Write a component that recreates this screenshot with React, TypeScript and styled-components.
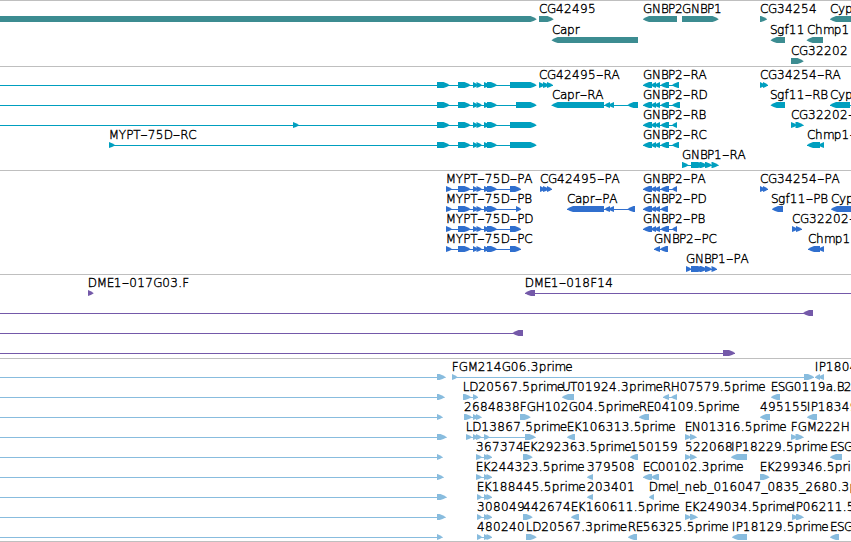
import React from 'react';
import styled, { createGlobalStyle } from 'styled-components';

const GlobalStyle = createGlobalStyle`
  body { margin: 0; background: #fff; overflow: hidden; }
`;

const Viewer = styled.main`
  display: flex;
  flex-direction: column;
  width: 851px;
  height: 542px;
  overflow: hidden;
  background: #fff;
`;

const Track = styled.section<{ $height: number; $color: string }>`
  box-sizing: border-box;
  flex: none;
  display: flex;
  flex-direction: column;
  height: ${(p) => p.$height}px;
  border-top: 1px solid #bfbfbf;
  color: ${(p) => p.$color};
`;

const Lane = styled.svg<{ $height: number }>`
  display: block;
  flex: none;
  width: 851px;
  height: ${(p) => p.$height}px;
  overflow: visible;
`;

const Label = styled.text`
  font-family: 'DejaVu Sans', sans-serif;
  font-size: 12px;
  font-weight: 200;
  fill: #000;
  stroke: #000;
  stroke-width: 0.38px;
`;

const BottomRule = styled.div`
  flex: none;
  height: 1px;
  background: #bfbfbf;
`;

type Direction = 1 | -1;
type Span = [start: number, end: number];
interface Feature {
  dir: Direction;
  spans: Span[];
  line?: Span;
}
interface RowData {
  labels: [x: number, text: string][];
  features: Feature[];
}
interface TrackData {
  id: string;
  color: string;
  height: number;
  rowHeight: number;
  rows: RowData[];
}

/* Advances used to space the label characters; digits take 8px. */
const ADVANCE: Record<string, number> = {
  A: 8, B: 7, C: 8, D: 9, E: 7, F: 7, G: 9, H: 9, I: 4, K: 8, L: 6.5, M: 10, N: 9,
  P: 7, R: 8, S: 7, T: 7, U: 8, X: 8, Y: 7.5, '-': 7.5, '.': 4, _: 6,
  a: 7, b: 8, c: 6, e: 7, f: 4.3, g: 7.5, h: 8, i: 3, l: 3, m: 10.7, n: 8, p: 7.8, r: 5, y: 7,
};

interface Run {
  text: string;
  xs: number[];
}

/* Splits a label into runs, keeping each hyphen apart so it can be drawn wide. */
const layoutRuns = (x: number, text: string): Run[] => {
  let cursor = x + (/^[ABD-FH-RT-Z]/.test(text) ? 0.7 : 0);
  return text
    .split(/(-)/)
    .filter(Boolean)
    .map((part) => ({
      text: part,
      xs: [...part].map((ch) => {
        const at = cursor;
        cursor += ADVANCE[ch] ?? 8;
        return at;
      }),
    }));
};

const arrowPoints = ([a, b]: Span, dir: Direction) => {
  const tip = Math.min(b - a, 6);
  const tail = dir === 1 ? a : b;
  const head = dir === 1 ? b : a;
  const neck = head - dir * tip;
  const mid = head - dir * tip * 0.5;
  return `${tail},15 ${neck},15 ${mid},16.3 ${head},18 ${head},18.6 ${mid},20 ${neck},21 ${tail},21`;
};

const f = (dir: Direction, ...spans: Span[]): Feature => ({ dir, spans });
const joined = (dir: Direction, ...spans: Span[]): Feature => ({
  dir,
  spans,
  line: [spans[0][0], spans[spans.length - 1][1]],
});
const lined = (dir: Direction, line: Span, ...spans: Span[]): Feature => ({ dir, spans, line });

const myptExons = (last: number): Span[] => [
  [437, 449.5], [458, 470.5], [473, 478], [476.5, 482], [484, 490], [487, 497], [last, 536.5],
];
const myptCds = (last: number) =>
  joined(1, [446, 452], [458, 470.5], [473, 478], [476.5, 482], [484, 490], [487, 497], [last, 521]);
const gnbp2 = (end: number) =>
  joined(-1, [643, 652], [651, 656], [654.5, 660], [660.5, 669], [672, end]);
const est = (start: number) => joined(1, [start, 482], [484, 489], [486.5, 492]);
const upstream = (end: number) => lined(1, [0, end], [437, end]);

const TRACKS: TrackData[] = [
  {
    id: 'genes', color: '#3c8c91', height: 66, rowHeight: 21,
    rows: [
      {
        labels: [[539, 'CG42495'], [643, 'GNBP2'], [682, 'GNBP1'], [760, 'CG34254'], [830, 'Cyp']],
        features: [f(1, [-10, 536.5]), f(1, [539, 553.5]), f(-1, [643, 677]), f(1, [682, 718.5]), f(1, [760, 767]), f(-1, [830, 870])],
      },
      {
        labels: [[552, 'Capr'], [770, 'Sgf11'], [807, 'Chmp1']],
        features: [f(-1, [551.7, 638]), f(-1, [770.7, 785]), f(-1, [806.7, 823])],
      },
      { labels: [[791, 'CG32202']], features: [f(1, [791, 803.5])] },
    ],
  },
  {
    id: 'transcripts', color: '#009fbf', height: 104, rowHeight: 20,
    rows: [
      {
        labels: [[539, 'CG42495-RA'], [643, 'GNBP2-RA'], [760, 'CG34254-RA']],
        features: [lined(1, [0, 536], ...myptExons(510)), joined(1, [539, 544.5], [543, 549], [547, 553]), gnbp2(679), joined(1, [760, 765], [763, 768])],
      },
      {
        labels: [[552, 'Capr-RA'], [643, 'GNBP2-RD'], [770, 'Sgf11-RB'], [830, 'Cyp']],
        features: [lined(1, [0, 536], ...myptExons(516)), joined(-1, [551.7, 604], [604.5, 610], [608.5, 614], [627.5, 638]), gnbp2(680), f(-1, [770.7, 785]), lined(-1, [830, 851], [830, 850])],
      },
      {
        labels: [[643, 'GNBP2-RB'], [791, 'CG32202-']],
        features: [lined(1, [0, 536], [293, 299], ...myptExons(510)), gnbp2(677), joined(1, [791, 797], [795.5, 803.5])],
      },
      {
        labels: [[108, 'MYPT-75D-RC'], [643, 'GNBP2-RC'], [807, 'Chmp1-']],
        features: [lined(1, [109, 536], [109, 115], ...myptExons(510)), gnbp2(679), joined(-1, [807, 820], [818.5, 824])],
      },
      {
        labels: [[682, 'GNBP1-RA']],
        features: [joined(1, [682, 688.5], [691, 704], [699.5, 707], [705, 712], [711.5, 718.5])],
      },
    ],
  },
  {
    id: 'proteins', color: '#306fce', height: 104, rowHeight: 20,
    rows: [
      {
        labels: [[445, 'MYPT-75D-PA'], [540, 'CG42495-PA'], [643, 'GNBP2-PA'], [760, 'CG34254-PA']],
        features: [myptCds(510), joined(1, [540, 545], [543, 549], [547, 552]), gnbp2(677), joined(1, [760, 765], [763, 768])],
      },
      {
        labels: [[445, 'MYPT-75D-PB'], [567, 'Capr-PA'], [643, 'GNBP2-PD'], [771, 'Sgf11-PB'], [831, 'Cyp']],
        features: [myptCds(516), joined(-1, [567, 604], [604.5, 610], [608.5, 614], [627.5, 635]), joined(-1, [643, 652], [651, 656], [654.5, 660], [660.5, 668]), f(-1, [772, 783]), f(-1, [831, 870])],
      },
      {
        labels: [[445, 'MYPT-75D-PD'], [643, 'GNBP2-PB'], [792, 'CG32202-']],
        features: [myptCds(510), gnbp2(677), joined(1, [792, 797.5], [796, 802])],
      },
      {
        labels: [[445, 'MYPT-75D-PC'], [654, 'GNBP2-PC'], [808, 'Chmp1']],
        features: [myptCds(510), joined(-1, [654, 660], [660, 668]), joined(-1, [808, 820], [818.5, 824])],
      },
      {
        labels: [[686, 'GNBP1-PA']],
        features: [joined(1, [686, 691.5], [691, 704], [699.5, 707], [705, 712], [711.5, 717])],
      },
    ],
  },
  {
    id: 'clones', color: '#7459a9', height: 84, rowHeight: 20,
    rows: [
      {
        labels: [[87, 'DME1-017G03.F'], [524, 'DME1-018F14']],
        features: [f(1, [88, 93.5]), lined(-1, [525, 851], [525, 535])],
      },
      { labels: [], features: [lined(-1, [0, 813], [803, 813])] },
      { labels: [], features: [lined(-1, [0, 523], [512.5, 523])] },
      { labels: [], features: [lined(1, [0, 735], [723, 735])] },
    ],
  },
  {
    id: 'ests', color: '#88bcde', height: 183, rowHeight: 20,
    rows: [
      {
        labels: [[451, 'FGM214G06.3prime'], [814, 'IP1804']],
        features: [upstream(445.5), lined(1, [452, 814], [452, 457.5], [804, 814]), joined(-1, [815, 820], [818.5, 824])],
      },
      {
        labels: [[462, 'LD20567.5prime'], [561.3, 'UT01924.3prime'], [662, 'RH07579.5prime'], [770, 'ESG0119a.B2']],
        features: [upstream(444.5), joined(1, [463, 471], [473, 478]), f(-1, [562, 574]), joined(-1, [663, 669], [671, 677]), f(-1, [771, 780])],
      },
      {
        labels: [[464, '2684838'], [519, 'FGH102G04.5prime'], [638, 'RE04109.5prime'], [760, '495155'], [806, 'IP18349']],
        features: [upstream(442.5), joined(1, [464, 472], [473, 478], [476, 481.5]), f(1, [520, 530.5]), f(-1, [639, 649]), f(-1, [760, 770]), f(-1, [807, 817])],
      },
      {
        labels: [[465, 'LD13867.5prime'], [566, 'EK106313.5prime'], [684, 'EN01316.5prime'], [790, 'FGM222H']],
        features: [upstream(446.5), joined(1, [466, 472], [473, 478], [476, 481.5], [484, 489.5], [525, 535.5]), f(-1, [567, 575]), joined(1, [685, 691], [690, 696.5]), joined(1, [791, 797], [795.5, 803.5])],
      },
      {
        labels: [[476, '367374'], [522, 'EK292363.5prime'], [630, '150159'], [685, '522068'], [730.3, 'IP18229.5prime'], [829.3, 'ESG']],
        features: [upstream(442.5), est(476), f(1, [523, 532.5]), f(-1, [630, 638]), joined(1, [685, 691], [690, 696.5]), f(-1, [731, 747]), f(-1, [830, 842])],
      },
      {
        labels: [[475, 'EK244323.5prime'], [587, '379508'], [642, 'EC00102.3prime'], [759, 'EK299346.5pri']],
        features: [upstream(443.5), est(476), f(-1, [587, 593]), joined(-1, [643, 652], [651, 659]), f(1, [760, 769.5])],
      },
      {
        labels: [[476, 'EK188445.5prime'], [587, '203401'], [648, 'Dmel_neb_016047_0835_2680.3p']],
        features: [upstream(446.5), est(477), f(-1, [587, 593]), f(-1, [649, 654])],
      },
      {
        labels: [[477, '308049'], [523, '442674'], [570, 'EK160611.5prime'], [684, 'EK249034.5prime'], [791, 'IP06211.5']],
        features: [upstream(445.5), est(477), f(1, [523, 532.5]), f(-1, [571, 579]), joined(1, [685, 691], [690, 697.5]), joined(1, [792, 798], [796, 803.5])],
      },
      {
        labels: [[477, '480240'], [525, 'LD20567.3prime'], [627, 'RE56325.5prime'], [731, 'IP18129.5prime'], [829.3, 'ESG']],
        features: [upstream(442.5), est(477), f(1, [526, 536.5]), f(-1, [628, 637]), f(-1, [732, 747]), f(-1, [830, 839])],
      },
    ],
  },
];

function FeatureGlyph({ feature }: { feature: Feature }) {
  const { line, spans, dir } = feature;
  return (
    <g fill="currentColor">
      {line && <rect x={line[0]} y={18} width={line[1] - line[0]} height={1} />}
      {spans.map((span, i) => (
        <polygon key={i} points={arrowPoints(span, dir)} />
      ))}
    </g>
  );
}

function FeatureLabel({ x, text }: { x: number; text: string }) {
  return (
    <Label y={12}>
      {layoutRuns(x, text).map((run, i) =>
        run.text === '-' ? (
          <tspan key={i} x={run.xs[0]} textLength={7.5} lengthAdjust="spacingAndGlyphs">
            -
          </tspan>
        ) : (
          <tspan key={i} x={run.xs.join(' ')}>
            {run.text}
          </tspan>
        ),
      )}
    </Label>
  );
}

function FeatureLane({ row, height }: { row: RowData; height: number }) {
  return (
    <Lane $height={height}>
      {row.features.map((feature, i) => (
        <FeatureGlyph key={i} feature={feature} />
      ))}
      {row.labels.map(([x, text]) => (
        <FeatureLabel key={`${x}-${text}`} x={x} text={text} />
      ))}
    </Lane>
  );
}

export default function App() {
  return (
    <>
      <GlobalStyle />
      <Viewer>
        {TRACKS.map((track) => (
          <Track key={track.id} $height={track.height} $color={track.color}>
            {track.rows.map((row, i) => (
              <FeatureLane key={i} row={row} height={track.rowHeight} />
            ))}
          </Track>
        ))}
        <BottomRule />
      </Viewer>
    </>
  );
}
